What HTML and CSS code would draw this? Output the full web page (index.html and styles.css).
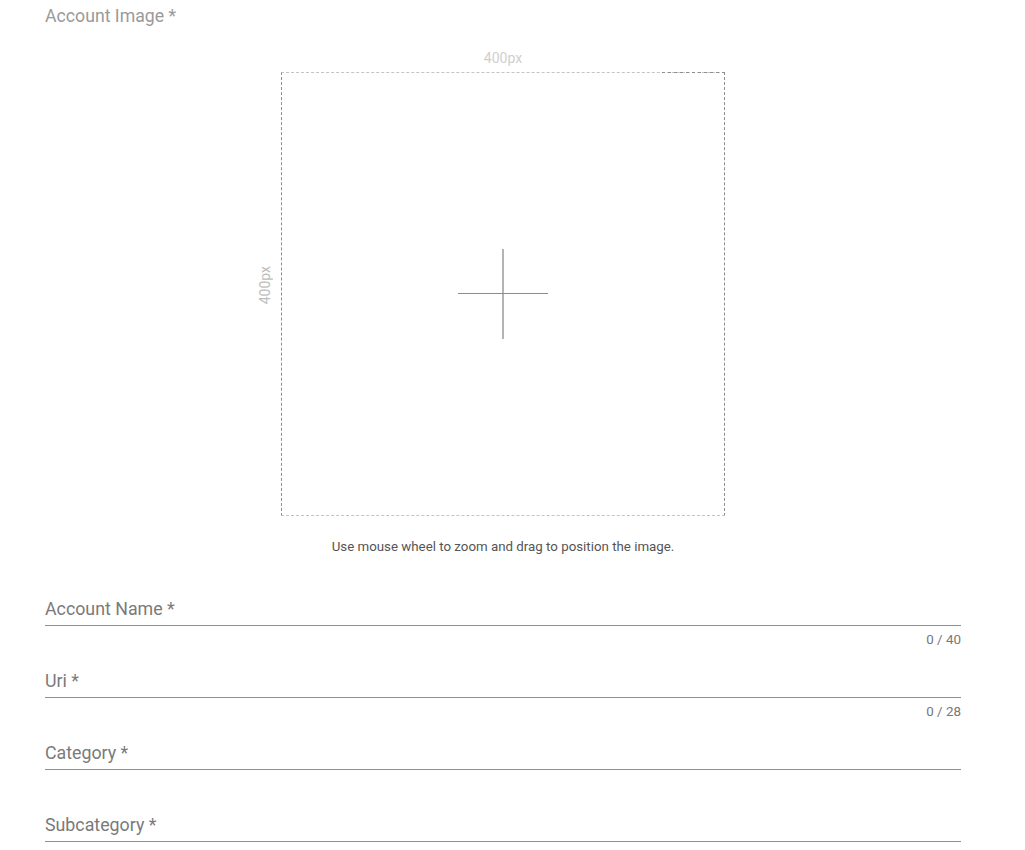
FILE: index.html
```html
<!DOCTYPE html>
<html lang="en">
<head>
<meta charset="utf-8">
<title>Account</title>
<link rel="stylesheet" href="styles.css">
</head>
<body>
<div class="page">
  <div class="section-title">Account Image *</div>
  <div class="cropper">
    <div class="ruler-top">400px</div>
    <div class="crop-box">
      <div class="ruler-left">400px</div>
      <svg class="cross" width="90" height="90" viewBox="0 0 90 90">
        <line x1="45" y1="0" x2="45" y2="90" stroke="#8c8c8c" stroke-width="1.3"/>
        <line x1="0" y1="44.5" x2="90" y2="44.5" stroke="#8c8c8c" stroke-width="1"/>
      </svg>
    </div>
    <div class="caption">Use mouse wheel to zoom and drag to position the image.</div>
  </div>

  <div class="field">
    <div class="field-input">Account Name *</div>
    <div class="field-hint">0 / 40</div>
  </div>
  <div class="field">
    <div class="field-input">Uri *</div>
    <div class="field-hint">0 / 28</div>
  </div>
  <div class="field">
    <div class="field-input">Category *</div>
    <div class="field-hint"></div>
  </div>
  <div class="field">
    <div class="field-input">Subcategory *</div>
    <div class="field-hint"></div>
  </div>
</div>
</body>
</html>
```
FILE: styles.css
```css
html, body {
  margin: 0;
  padding: 0;
  background: #ffffff;
}
body {
  font-family: Roboto, "Liberation Sans", Arial, sans-serif;
}
.page {
  width: 916px;
  margin-left: 45px;
  padding-top: 6px;
}
.section-title {
  font-size: 17.7px;
  line-height: 20px;
  color: #9a9a9a;
}
.cropper {
  display: flex;
  flex-direction: column;
  align-items: center;
  margin-top: 24px;
}
.ruler-top {
  font-size: 14px;
  line-height: 16px;
  color: #cfcfcf;
  margin-bottom: 6px;
}
.crop-box {
  position: relative;
  width: 442px;
  height: 442px;
  border-top: 1px dashed #c4c4c4;
  border-bottom: 1px dashed #c4c4c4;
  border-left: 1px dashed #8e8e8e;
  border-right: 1px dashed #8e8e8e;
  display: flex;
  align-items: center;
  justify-content: center;
}
.crop-box::after {
  content: "";
  position: absolute;
  top: -1px;
  right: -1px;
  width: 66px;
  height: 1px;
  background: repeating-linear-gradient(to left, #8e8e8e 0 3px, transparent 3px 6px);
}
.ruler-left {
  position: absolute;
  left: -25px;
  top: 193px;
  writing-mode: vertical-rl;
  transform: rotate(180deg);
  font-size: 14px;
  line-height: 16px;
  color: #bdbdbd;
}
.cross {
  display: block;
}
.caption {
  margin-top: 24px;
  font-size: 13.3px;
  line-height: 14px;
  color: #555555;
}
.cropper + .field {
  margin-top: 36px;
}
.field {
  height: 72px;
}
.field-input {
  box-sizing: border-box;
  height: 36px;
  padding-top: 9px;
  font-size: 17.8px;
  line-height: 20px;
  color: #7a7a7a;
  border-bottom: 1px solid #8f8f8f;
}
.field-hint {
  padding-top: 7px;
  font-size: 13.4px;
  line-height: 14px;
  color: #777777;
  text-align: right;
}
```
